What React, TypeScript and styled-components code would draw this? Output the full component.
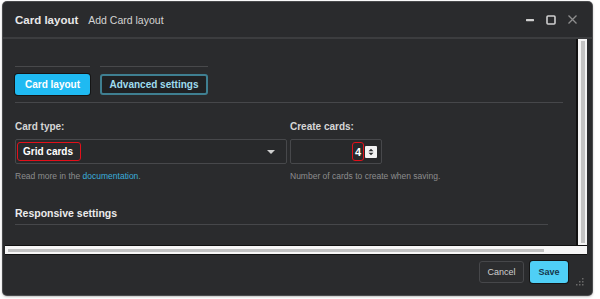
import React from "react";
import styled, { createGlobalStyle } from "styled-components";

const Global = createGlobalStyle`
  html, body { margin: 0; padding: 0; background: #ffffff; }
  body { font-family: "Liberation Sans", Arial, sans-serif; }
  * { box-sizing: border-box; }
`;

const Page = styled.div`
  width: 600px;
  height: 299px;
  padding: 2px 0 0 3px;
  background: #ffffff;
`;

const Window = styled.div`
  width: 589px;
  height: 293px;
  background: #2a2b2d;
  border-radius: 4px;
  box-shadow: 0 0 0 1px #4a4b4d, 0 1px 3px rgba(0, 0, 0, 0.5);
  display: flex;
  flex-direction: column;
  overflow: hidden;
`;

const TitleBar = styled.div`
  height: 37px;
  flex: none;
  display: flex;
  align-items: center;
  padding: 0 14px 0 12px;
  border-bottom: 2px solid #3c3d3f;
`;

const TitleMain = styled.span`
  font-size: 11.5px;
  font-weight: 700;
  color: #e8e8e8;
`;

const TitleSub = styled.span`
  font-size: 10.5px;
  color: #d4d4d4;
  margin-left: 10px;
`;

const TitleIcons = styled.div`
  margin-left: auto;
  display: flex;
  align-items: center;
  gap: 11px;
`;

const Main = styled.div`
  flex: 1;
  display: flex;
  flex-direction: column;
  margin-right: 5px;
  min-height: 0;
`;

const ScrollRow = styled.div`
  flex: 1;
  display: flex;
  min-height: 0;
`;

const Content = styled.div`
  flex: 1;
  padding: 27px 0 0 12px;
  overflow: hidden;
`;

const VScroll = styled.div`
  width: 11px;
  flex: none;
  border-left: 2px solid #111;
  background: #f4f4f4;
  display: flex;
  justify-content: center;
  padding: 2px 0;
`;

const VThumb = styled.div`
  width: 4px;
  height: 100%;
  background: #c4c4c4;
`;

const HScroll = styled.div`
  height: 10px;
  flex: none;
  margin-left: 2px;
  border-top: 1px solid #111;
  border-bottom: 1px solid #111;
  background: #f6f6f6;
  display: flex;
  align-items: center;
  padding-left: 3px;
`;

const HThumb = styled.div`
  width: 536px;
  height: 3px;
  background: #c2c2c2;
`;

const TabRow = styled.div`
  display: flex;
  gap: 10px;
`;

const TabWrap = styled.div<{ $w: number }>`
  width: ${(p) => p.$w}px;
  border-top: 1px solid #48494b;
  padding-top: 7px;
`;

const TabButton = styled.div<{ $active?: boolean }>`
  height: 21px;
  border-radius: 3px;
  display: flex;
  align-items: center;
  justify-content: center;
  font-size: 10px;
  font-weight: 700;
  ${(p) =>
    p.$active
      ? `background: #1fbaf2; color: #ffffff; box-shadow: 0 0 0 1px #151515;`
      : `background: #202123; color: #9fdcef; border: 2px solid #3f7f91;`}
`;

const Divider = styled.div<{ $w: number; $mt: number }>`
  width: ${(p) => p.$w}px;
  height: 1px;
  margin-top: ${(p) => p.$mt}px;
  background: #46474a;
`;

const FieldRow = styled.div`
  display: flex;
  margin-top: 17px;
`;

const Field = styled.div<{ $w: number }>`
  width: ${(p) => p.$w}px;
  display: flex;
  flex-direction: column;
`;

const Label = styled.div`
  font-size: 10px;
  font-weight: 700;
  line-height: 14px;
  color: #d6d6d6;
  margin-bottom: 5px;
`;

const InputBox = styled.div<{ $w: number }>`
  width: ${(p) => p.$w}px;
  height: 25px;
  border: 1px solid #47484b;
  border-radius: 2px;
  background: #28292b;
  display: flex;
  align-items: center;
  padding: 0 4px 0 1px;
`;

const Marked = styled.span`
  height: 19px;
  border: 1px solid #e3101a;
  border-radius: 3px;
  display: flex;
  align-items: center;
  font-size: 10px;
  font-weight: 700;
  color: #ffffff;
`;

const SelectValue = styled(Marked)`
  padding: 0 7px 0 5px;
`;

const NumberValue = styled(Marked)`
  padding: 0 2px;
  font-size: 11px;
  margin-left: auto;
`;

const Caret = styled.span`
  margin-left: auto;
  margin-right: 7px;
  width: 0;
  height: 0;
  border-left: 4px solid transparent;
  border-right: 4px solid transparent;
  border-top: 4px solid #cfcfcf;
`;

const Help = styled.div`
  margin-top: 6px;
  font-size: 8.5px;
  line-height: 12px;
  color: #8d8d8d;
`;

const Link = styled.span`
  color: #3aaedc;
`;

const Heading = styled.div`
  margin-top: 24px;
  font-size: 10.5px;
  font-weight: 700;
  line-height: 14px;
  color: #ececec;
`;

const Footer = styled.div`
  height: 40px;
  flex: none;
  display: flex;
  justify-content: flex-end;
  align-items: flex-start;
  padding: 6px 8px 0 0;
  gap: 6px;
`;

const FooterButton = styled.div<{ $primary?: boolean }>`
  height: 22px;
  border-radius: 3px;
  display: flex;
  align-items: center;
  justify-content: center;
  font-size: 9px;
  ${(p) =>
    p.$primary
      ? `width: 38px; background: #4fcff6; color: #16384c; font-weight: 700; box-shadow: 0 0 0 1px #141414;`
      : `width: 45px; background: #2c2d2f; color: #d0d0d0; border: 1px solid #46474a;`}
`;

const Grip = styled.svg`
  align-self: flex-end;
  margin: 0 0 9px 1px;
`;

const Spinner = () => (
  <svg width="12" height="12" viewBox="0 0 12 12" style={{ marginLeft: 1 }}>
    <rect x="0" y="0" width="12" height="12" rx="1" fill="#f2f2f2" />
    <path d="M3.5 5.2 L6 2.8 L8.5 5.2 Z" fill="#2a2b2d" />
    <path d="M3.5 6.8 L6 9.2 L8.5 6.8 Z" fill="#2a2b2d" />
  </svg>
);

export default function App() {
  return (
    <>
      <Global />
      <Page>
        <Window>
          <TitleBar>
            <TitleMain>Card layout</TitleMain>
            <TitleSub>Add Card layout</TitleSub>
            <TitleIcons>
              <svg width="10" height="10" viewBox="0 0 10 10">
                <rect x="1" y="4" width="8" height="2.2" rx="0.6" fill="#cfcfcf" />
              </svg>
              <svg width="10" height="10" viewBox="0 0 10 10">
                <rect x="1" y="1" width="8" height="8" rx="1" fill="none" stroke="#cfcfcf" strokeWidth="1.6" />
              </svg>
              <svg width="11" height="11" viewBox="0 0 11 11">
                <path d="M1.5 1.5 L9.5 9.5 M9.5 1.5 L1.5 9.5" stroke="#8e8e8e" strokeWidth="1.3" />
              </svg>
            </TitleIcons>
          </TitleBar>
          <Main>
            <ScrollRow>
              <Content>
                <TabRow>
                  <TabWrap $w={75}>
                    <TabButton $active>Card layout</TabButton>
                  </TabWrap>
                  <TabWrap $w={108}>
                    <TabButton>Advanced settings</TabButton>
                  </TabWrap>
                </TabRow>
                <Divider $w={548} $mt={7} />
                <FieldRow>
                  <Field $w={275}>
                    <Label>Card type:</Label>
                    <InputBox $w={272}>
                      <SelectValue>Grid cards</SelectValue>
                      <Caret />
                    </InputBox>
                    <Help>
                      Read more in the <Link>documentation</Link>.
                    </Help>
                  </Field>
                  <Field $w={200}>
                    <Label>Create cards:</Label>
                    <InputBox $w={92}>
                      <NumberValue>4</NumberValue>
                      <Spinner />
                    </InputBox>
                    <Help>Number of cards to create when saving.</Help>
                  </Field>
                </FieldRow>
                <Heading>Responsive settings</Heading>
                <Divider $w={533} $mt={4} />
              </Content>
              <VScroll>
                <VThumb />
              </VScroll>
            </ScrollRow>
            <HScroll>
              <HThumb />
            </HScroll>
          </Main>
          <Footer>
            <FooterButton>Cancel</FooterButton>
            <FooterButton $primary>Save</FooterButton>
            <Grip width="9" height="9" viewBox="0 0 9 9">
              <rect x="7" y="1" width="1.5" height="1.5" fill="#6a6a6a" />
              <rect x="4" y="4" width="1.5" height="1.5" fill="#6a6a6a" />
              <rect x="7" y="4" width="1.5" height="1.5" fill="#6a6a6a" />
              <rect x="1" y="7" width="1.5" height="1.5" fill="#6a6a6a" />
              <rect x="4" y="7" width="1.5" height="1.5" fill="#6a6a6a" />
              <rect x="7" y="7" width="1.5" height="1.5" fill="#6a6a6a" />
            </Grip>
          </Footer>
        </Window>
      </Page>
    </>
  );
}
